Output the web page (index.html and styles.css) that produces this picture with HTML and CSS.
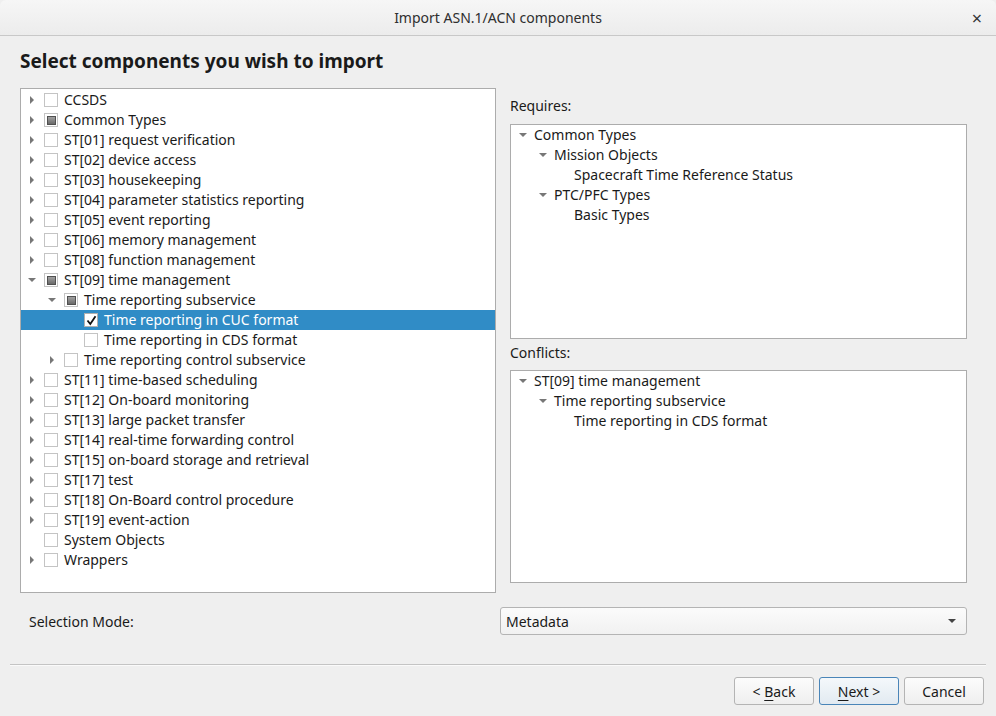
FILE: index.html
```html
<!DOCTYPE html>
<html>
<head>
<meta charset="utf-8">
<link rel="stylesheet" href="styles.css">
</head>
<body>
<div class="window">
  <div class="titlebar">
    <span class="title">Import ASN.1/ACN components</span>
    <span class="close">×</span>
  </div>
  <div class="content">
    <h1 class="heading">Select components you wish to import</h1>
    <div class="main">
      <div class="tree left">
        <div class="row"><span class="arr r"></span><span class="cb"></span><span>CCSDS</span></div>
        <div class="row"><span class="arr r"></span><span class="cb part"></span><span>Common Types</span></div>
        <div class="row"><span class="arr r"></span><span class="cb"></span><span>ST[01] request verification</span></div>
        <div class="row"><span class="arr r"></span><span class="cb"></span><span>ST[02] device access</span></div>
        <div class="row"><span class="arr r"></span><span class="cb"></span><span>ST[03] housekeeping</span></div>
        <div class="row"><span class="arr r"></span><span class="cb"></span><span>ST[04] parameter statistics reporting</span></div>
        <div class="row"><span class="arr r"></span><span class="cb"></span><span>ST[05] event reporting</span></div>
        <div class="row"><span class="arr r"></span><span class="cb"></span><span>ST[06] memory management</span></div>
        <div class="row"><span class="arr r"></span><span class="cb"></span><span>ST[08] function management</span></div>
        <div class="row"><span class="arr d"></span><span class="cb part"></span><span>ST[09] time management</span></div>
        <div class="row l1"><span class="arr d"></span><span class="cb part"></span><span>Time reporting subservice</span></div>
        <div class="row l2 sel"><span class="arr"></span><span class="cb on"><svg width="11" height="11" viewBox="0 0 11 11"><path d="M1.5 5.5 L4.3 9 L9.5 1.2" fill="none" stroke="#111" stroke-width="1.8"/></svg></span><span>Time reporting in CUC format</span></div>
        <div class="row l2"><span class="arr"></span><span class="cb"></span><span>Time reporting in CDS format</span></div>
        <div class="row l1"><span class="arr r"></span><span class="cb"></span><span>Time reporting control subservice</span></div>
        <div class="row"><span class="arr r"></span><span class="cb"></span><span>ST[11] time-based scheduling</span></div>
        <div class="row"><span class="arr r"></span><span class="cb"></span><span>ST[12] On-board monitoring</span></div>
        <div class="row"><span class="arr r"></span><span class="cb"></span><span>ST[13] large packet transfer</span></div>
        <div class="row"><span class="arr r"></span><span class="cb"></span><span>ST[14] real-time forwarding control</span></div>
        <div class="row"><span class="arr r"></span><span class="cb"></span><span>ST[15] on-board storage and retrieval</span></div>
        <div class="row"><span class="arr r"></span><span class="cb"></span><span>ST[17] test</span></div>
        <div class="row"><span class="arr r"></span><span class="cb"></span><span>ST[18] On-Board control procedure</span></div>
        <div class="row"><span class="arr r"></span><span class="cb"></span><span>ST[19] event-action</span></div>
        <div class="row"><span class="arr"></span><span class="cb"></span><span>System Objects</span></div>
        <div class="row"><span class="arr r"></span><span class="cb"></span><span>Wrappers</span></div>
      </div>
      <div class="side">
        <div class="label">Requires:</div>
        <div class="tree small req">
          <div class="row"><span class="arr d"></span><span>Common Types</span></div>
          <div class="row l1"><span class="arr d"></span><span>Mission Objects</span></div>
          <div class="row l2"><span class="arr"></span><span>Spacecraft Time Reference Status</span></div>
          <div class="row l1"><span class="arr d"></span><span>PTC/PFC Types</span></div>
          <div class="row l2"><span class="arr"></span><span>Basic Types</span></div>
        </div>
        <div class="label lab2">Conflicts:</div>
        <div class="tree small conf">
          <div class="row"><span class="arr d"></span><span>ST[09] time management</span></div>
          <div class="row l1"><span class="arr d"></span><span>Time reporting subservice</span></div>
          <div class="row l2"><span class="arr"></span><span>Time reporting in CDS format</span></div>
        </div>
      </div>
    </div>
    <div class="mode">
      <span class="mode-label">Selection Mode:</span>
      <div class="combo"><span>Metadata</span><span class="carrow"></span></div>
    </div>
  </div>
  <div class="sep"></div>
  <div class="buttons">
    <button class="btn">&lt; <u>B</u>ack</button>
    <button class="btn def"><u>N</u>ext &gt;</button>
    <button class="btn">Cancel</button>
  </div>
</div>
</body>
</html>
```
FILE: styles.css
```css
html, body {
  margin: 0;
  padding: 0;
  background: #efefef;
}
body {
  font-family: "Noto Sans", "Open Sans", sans-serif;
  font-size: 14px;
  color: #1a1a1a;
  width: 996px;
  height: 716px;
  overflow: hidden;
}
.window {
  display: flex;
  flex-direction: column;
  height: 716px;
}
.titlebar {
  height: 35px;
  border-bottom: 1px solid #c8c8c8;
  background: linear-gradient(#f6f6f6, #ececec);
  display: flex;
  align-items: center;
  justify-content: center;
  position: relative;
  border-radius: 6px 6px 0 0;
}
.title {
  font-size: 14px;
  color: #2e2e2e;
}
.close {
  position: absolute;
  right: 14px;
  top: 6px;
  font-size: 18px;
  color: #333;
}
.content {
  padding: 0 29px 0 20px;
}
.heading {
  margin: 12px 0 0 0;
  font-size: 19px;
  font-weight: bold;
  line-height: 26px;
  height: 26px;
  color: #1a1a1a;
}
.main {
  display: flex;
  margin-top: 14px;
  gap: 14px;
}
.tree {
  background: #fff;
  border: 1px solid #acacac;
  box-sizing: border-box;
}
.left {
  width: 476px;
  height: 505px;
  padding-top: 1px;
}
.row {
  height: 20px;
  display: flex;
  align-items: center;
  white-space: nowrap;
  line-height: 20px;
  padding-left: 5px;
}
.row.l1 { padding-left: 25px; }
.row.l2 { padding-left: 45px; }
.row.sel {
  background: #308cc6;
  color: #fff;
}
.arr {
  width: 18px;
  height: 20px;
  position: relative;
  flex: none;
}
.arr.r::after {
  content: "";
  position: absolute;
  left: 4px;
  top: 6px;
  border-left: 4px solid #777;
  border-top: 4px solid transparent;
  border-bottom: 4px solid transparent;
}
.arr.d::after {
  content: "";
  position: absolute;
  left: 2px;
  top: 8px;
  border-top: 4px solid #777;
  border-left: 4px solid transparent;
  border-right: 4px solid transparent;
}
.cb {
  width: 12px;
  height: 12px;
  border: 1px solid #c4c4c4;
  background: #fff;
  margin-right: 6px;
  flex: none;
  position: relative;
  display: flex;
  align-items: center;
  justify-content: center;
}
.cb.part::after {
  content: "";
  width: 9px;
  height: 9px;
  background: linear-gradient(#a0a0a0, #6a6a6a);
  border: 1px solid #505050;
  box-sizing: border-box;
}
.cb.on {
  border-color: #b0b0b0;
}
.side {
  width: 457px;
  display: flex;
  flex-direction: column;
}
.label {
  height: 20px;
  line-height: 20px;
  margin-top: 8px;
  margin-bottom: 8px;
}
.lab2 {
  margin-top: 4px;
  margin-bottom: 7px;
}
.small {
  height: 215px;
  width: 457px;
  padding-top: 0px;
}
.small .row { padding-left: 6px; }
.small .row .arr { width: 13px; margin-right: 4px; }
.small .row.l1 { padding-left: 26px; }
.small .row.l2 { padding-left: 46px; }
.conf {
  height: 213px;
}
.mode {
  display: flex;
  align-items: center;
  margin-top: 14px;
  height: 28px;
}
.mode-label {
  width: 471px;
  padding-left: 9px;
}
.combo {
  width: 467px;
  height: 28px;
  box-sizing: border-box;
  border: 1px solid #b4b4b4;
  border-radius: 3px;
  background: linear-gradient(#fbfbfb, #f1f1f1);
  display: flex;
  align-items: center;
  justify-content: space-between;
  padding: 0 10px 0 5px;
}
.carrow {
  width: 0;
  height: 0;
  border-top: 4px solid #444;
  border-left: 4px solid transparent;
  border-right: 4px solid transparent;
}
.sep {
  margin: 29px 10px 0 10px;
  height: 0;
  border-top: 1px solid #c4c4c4;
  border-bottom: 1px solid #fafafa;
}
.buttons {
  display: flex;
  justify-content: flex-end;
  gap: 5px;
  padding: 11px 12px 0 0;
}
.btn {
  width: 80px;
  height: 28px;
  font-family: "Noto Sans", "Open Sans", sans-serif;
  font-size: 14px;
  color: #1a1a1a;
  border: 1px solid #b4b4b4;
  border-radius: 3px;
  background: linear-gradient(#fcfcfc, #efefef);
  padding: 0;
}
.btn.def {
  border-color: #4a85b8;
  background: linear-gradient(#f4f8fb, #e2eaf1);
}
.btn u {
  text-decoration-thickness: 1px;
  text-underline-offset: 3px;
}
```
